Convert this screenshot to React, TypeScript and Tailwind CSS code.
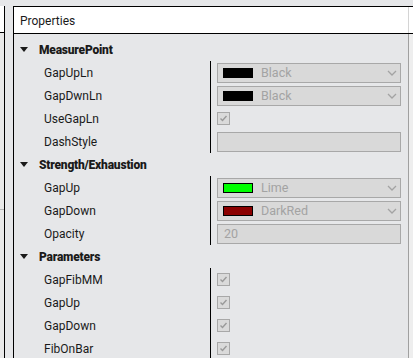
import React from "react";

const font = { fontFamily: 'Roboto, "Noto Sans", sans-serif' };

function Chevron() {
  return (
    <svg width="10" height="6" viewBox="0 0 10 6" className="shrink-0">
      <polyline points="1,1 5,5 9,1" fill="none" stroke="#a3a3a3" strokeWidth="1.3" />
    </svg>
  );
}

function Check() {
  return (
    <div className="w-[13px] h-[13px] border border-[#a8a8a8] bg-[#dadada] flex items-center justify-center">
      <svg width="9" height="9" viewBox="0 0 9 9">
        <path d="M1.5 4.5 L3.5 6.5 L7.5 2" fill="none" stroke="#9a9a9a" strokeWidth="1.4" />
      </svg>
    </div>
  );
}

function ColorSelect({ color, name }: { color: string; name: string }) {
  return (
    <div className="w-[184px] h-[20px] border border-[#a8a8a8] bg-[#d9d9d9] flex items-center pl-[5px] pr-[3px]">
      <div className="w-[30px] h-[10px] border border-black" style={{ backgroundColor: color }} />
      <span className="ml-[8px] text-[12.5px] text-[#a3a3a3] flex-1 leading-[20px] pt-[1px]">{name}</span>
      <Chevron />
    </div>
  );
}

function TextBox({ value }: { value?: string }) {
  return (
    <div className="w-[184px] h-[20px] border border-[#a8a8a8] bg-[#d9d9d9] flex items-center pl-[6px] text-[12.5px] text-[#a3a3a3] leading-[20px] pt-[1px]">
      {value}
    </div>
  );
}

function Category({ title }: { title: string }) {
  return (
    <div className="h-[23px] flex items-center">
      <svg width="8" height="5" viewBox="0 0 8 5" className="ml-[6px]">
        <polygon points="0,0 8,0 4,5" fill="#1a1a1a" />
      </svg>
      <span className="ml-[11px] text-[12px] font-black tracking-[-0.2px] text-[#1a1a1a] leading-[23px] pt-[2px]">{title}</span>
    </div>
  );
}

function Row({ label, children }: { label: string; children?: React.ReactNode }) {
  return (
    <div className="h-[23px] flex items-center">
      <div className="w-[197px] pl-[30px] text-[12px] text-[#1a1a1a] leading-[23px] pt-[2px]">{label}</div>
      <div className="pl-[6px] flex items-center">{children}</div>
    </div>
  );
}

function Group({ children }: { children: React.ReactNode }) {
  return (
    <div className="relative">
      <div className="absolute left-[196px] top-0 bottom-0 w-px bg-black" />
      {children}
    </div>
  );
}

export default function App() {
  return (
    <div className="w-[413px] h-[358px] bg-[#e6e7e9] flex overflow-hidden" style={font}>
      {/* left strip */}
      <div className="w-[5px] mt-[6px] flex flex-col border-r border-black">
        <div className="h-[27px] bg-white border-b border-black" />
        <div className="flex-1 bg-[#e9e9e9] flex flex-col">
          <div className="h-[176px]" />
          <div className="h-px bg-[#b5b5b5]" />
        </div>
      </div>
      <div className="w-[8px]" />
      {/* properties */}
      <div className="flex-1 mt-[6px] flex flex-col border-l border-t border-black">
        <div className="h-[27px] bg-white border-b border-black flex items-center">
          <span className="pl-[6px] text-[12px] text-[#1a1a1a] leading-[26px] pt-[2px] flex-1">Properties</span>
          <div className="w-px h-full bg-[#d4d4d4]" />
          <div className="w-[4px]" />
        </div>
        <div className="flex-1 flex">
          <div className="flex-1 pt-[4px]">
            <Category title="MeasurePoint" />
            <Group>
              <Row label="GapUpLn"><ColorSelect color="#000000" name="Black" /></Row>
              <Row label="GapDwnLn"><ColorSelect color="#000000" name="Black" /></Row>
              <Row label="UseGapLn"><Check /></Row>
              <Row label="DashStyle"><TextBox /></Row>
            </Group>
            <Category title="Strength/Exhaustion" />
            <Group>
              <Row label="GapUp"><ColorSelect color="#00ff00" name="Lime" /></Row>
              <Row label="GapDown"><ColorSelect color="#8b0000" name="DarkRed" /></Row>
              <Row label="Opacity"><TextBox value="20" /></Row>
            </Group>
            <Category title="Parameters" />
            <Group>
              <Row label="GapFibMM"><Check /></Row>
              <Row label="GapUp"><Check /></Row>
              <Row label="GapDown"><Check /></Row>
              <Row label="FibOnBar"><Check /></Row>
            </Group>
          </div>
          <div className="w-[5px] border-l border-[#a0a0a0] bg-[#eeeeee]" />
        </div>
      </div>
    </div>
  );
}
